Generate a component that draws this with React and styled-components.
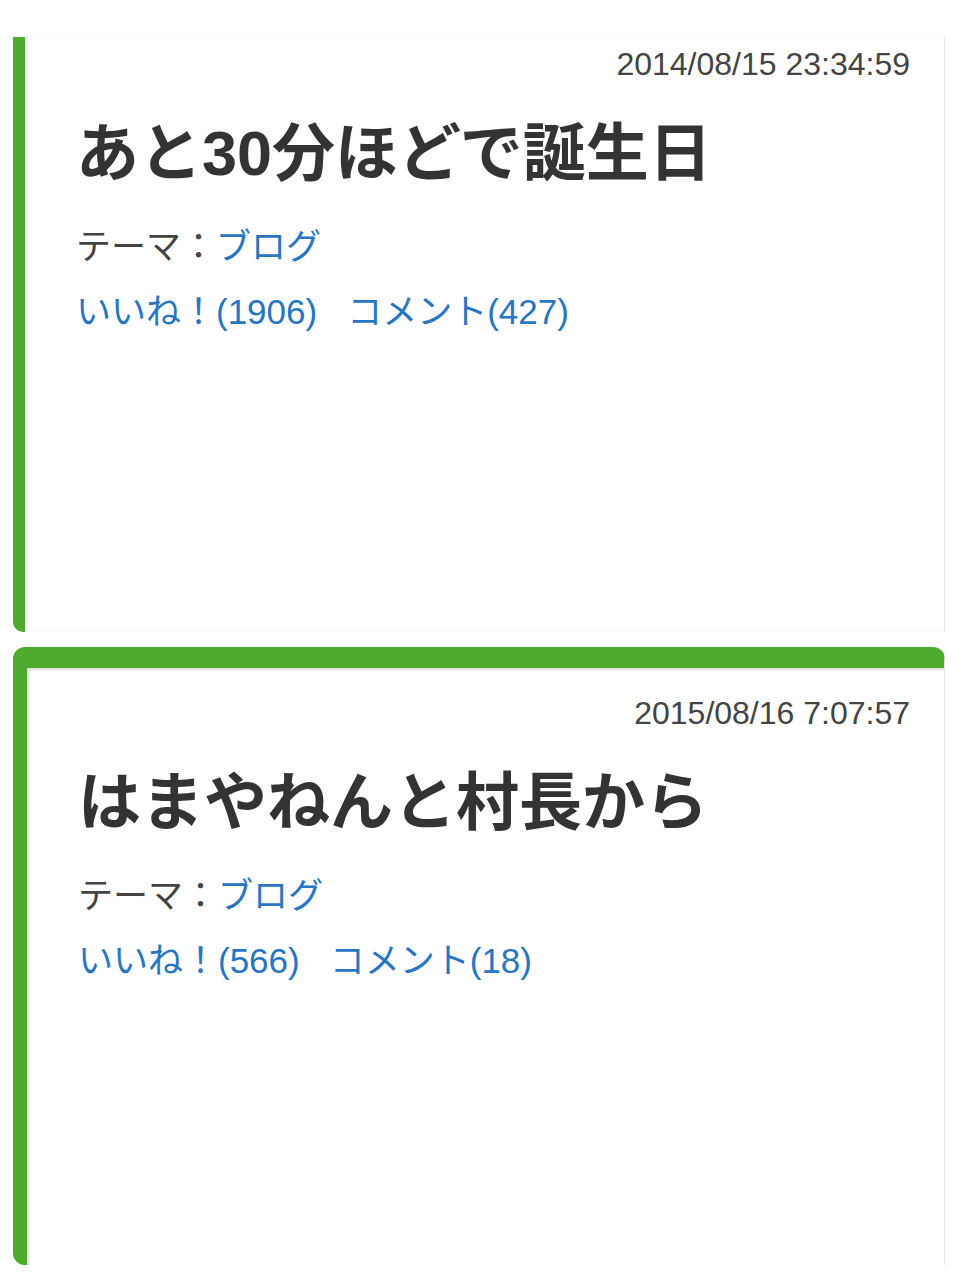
import React from "react";
import styled, { createGlobalStyle } from "styled-components";

const GlobalStyle = createGlobalStyle`
  body {
    margin: 0;
    background: #fff;
    font-family: "Liberation Sans", "Noto Sans CJK JP", sans-serif;
  }
`;

const Page = styled.div`
  display: flex;
  flex-direction: column;
  gap: 15px;
  padding: 37px 15px 0 13px;
`;

const Card = styled.div`
  box-sizing: border-box;
  height: ${(p) => p.h}px;
  background: #fff;
  border-left: ${(p) => p.left}px solid #4dac2b;
  border-top: ${(p) => (p.top ? `${p.top}px solid #4dac2b` : "none")};
  border-right: 1px solid #e4e4e4;
  border-radius: ${(p) => (p.top ? "12px 12px 0 12px" : "0 0 0 10px")};
  box-shadow: ${(p) =>
    p.top
      ? "inset 2px 2px 3px rgba(0, 0, 0, 0.14)"
      : "inset 2px 0 3px -1px rgba(0, 0, 0, 0.14)"};
  padding: ${(p) => p.padTop}px 34px 0 51px;
`;

const Stamp = styled.div`
  text-align: right;
  font-size: 32px;
  line-height: 38px;
  color: #444;
`;

const Title = styled.h1`
  margin: 29px 0 0;
  font-size: 63px;
  line-height: 83px;
  font-weight: bold;
  color: #333;
`;

const Theme = styled.div`
  margin-top: 30px;
  font-size: 35px;
  line-height: 44px;
  color: #444;
`;

const Link = styled.a`
  color: #2676c4;
  text-decoration: none;
`;

const Stats = styled.div`
  display: flex;
  gap: 30px;
  margin-top: 21px;
  font-size: 35px;
  line-height: 44px;
`;

const posts = [
  {
    date: "2014/08/15 23:34:59",
    title: "あと30分ほどで誕生日",
    likes: 1906,
    comments: 427,
    card: { h: 595, left: 12, top: 0, padTop: 8 },
  },
  {
    date: "2015/08/16 7:07:57",
    title: "はまやねんと村長から",
    likes: 566,
    comments: 18,
    card: { h: 618, left: 14, top: 21, padTop: 26 },
  },
];

export default function App() {
  return (
    <>
      <GlobalStyle />
      <Page>
        {posts.map((post) => (
          <Card key={post.date} {...post.card}>
            <Stamp>{post.date}</Stamp>
            <Title>{post.title}</Title>
            <Theme>
              テーマ：<Link href="#">ブログ</Link>
            </Theme>
            <Stats>
              <Link href="#">いいね！({post.likes})</Link>
              <Link href="#">コメント({post.comments})</Link>
            </Stats>
          </Card>
        ))}
      </Page>
    </>
  );
}
